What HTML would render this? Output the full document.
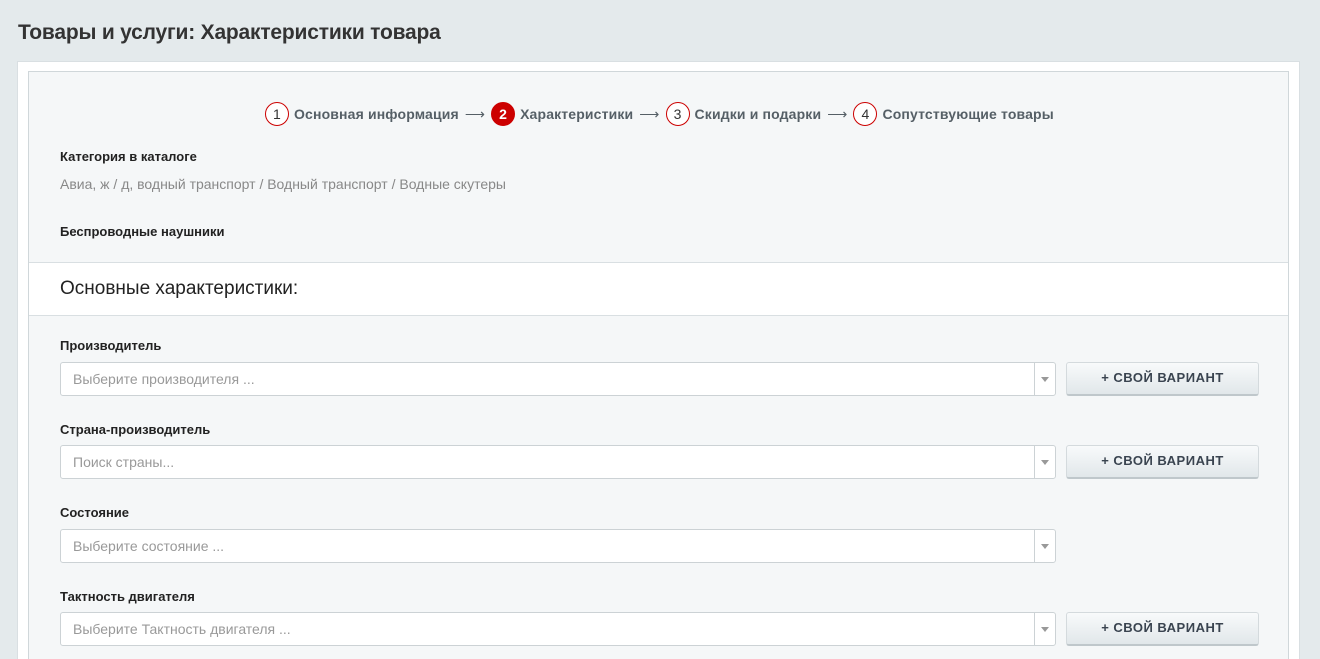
<!DOCTYPE html>
<html style="width:1320px;height:659px;overflow:hidden"><head><meta charset="utf-8"><style>
*{box-sizing:border-box;margin:0;padding:0}
body{width:1320px;height:659px;overflow:hidden;background:#e4eaec;font-family:"Liberation Sans",sans-serif;position:relative}
h1{position:absolute;left:18px;top:21px;font-size:21px;font-weight:bold;color:#333;letter-spacing:-0.2px}
.outer{position:absolute;left:17px;top:61px;width:1283px;height:598px;background:#fff;border:1px solid #d9dfe2;border-bottom:none;overflow:hidden}
.inner{position:absolute;left:10px;top:9px;width:1261px;height:620px;background:#f5f7f8;border:1px solid #d0d7da}
.steps{position:absolute;top:30px;left:236px;font-size:14px;font-weight:bold;color:#555f66;display:flex;align-items:center;white-space:nowrap;letter-spacing:0.15px}
.c{display:inline-block;width:24px;height:24px;border:1px solid #c00;border-radius:50%;text-align:center;line-height:22px;color:#333;font-weight:normal;margin-right:5px;background:#fff}
.c.a{background:#c00;color:#fff;font-weight:bold}
.ar{margin:0 6px;font-weight:normal}
.lab{position:absolute;left:31px;font-size:13px;font-weight:bold;color:#222}
.path{position:absolute;left:31px;top:104px;font-size:14px;color:#888}
.band{position:absolute;left:0;top:190px;width:1259px;height:54px;background:#fff;border-top:1px solid #d9dfe2;border-bottom:1px solid #d9dfe2}
.band span{position:absolute;left:31px;top:15px;font-size:19px;color:#222}
.sel{position:absolute;left:31px;width:996px;height:34px;background:#fff;border:1px solid #ccd2d5;border-radius:3px;font-size:14px;color:#999;padding:8px 12px}
.sel:after{content:"";position:absolute;right:0;top:0;width:20px;height:32px;border-left:1px solid #ccd2d5}
.sel i{position:absolute;right:6px;top:14px;border:4px solid transparent;border-top:5px solid #999;z-index:1}
.btn{position:absolute;left:1037px;width:193px;height:34px;border-radius:3px;background:linear-gradient(#f8fafb,#e1e7ea);border:1px solid #d4dadd;border-bottom:2px solid #bfc7cb;font-size:13px;font-weight:bold;color:#3a4450;text-align:center;line-height:30px;letter-spacing:0.5px}
</style></head><body>
<h1>Товары и услуги: Характеристики товара</h1>
<div class="outer"><div class="inner">
<div class="steps"><span class="c">1</span>Основная информация<span class="ar">⟶</span><span class="c a">2</span>Характеристики<span class="ar">⟶</span><span class="c">3</span>Скидки и подарки<span class="ar">⟶</span><span class="c">4</span>Сопутствующие товары</div>
<div class="lab" style="top:77px">Категория в каталоге</div>
<div class="path">Авиа, ж / д, водный транспорт / Водный транспорт / Водные скутеры</div>
<div class="lab" style="top:152px">Беспроводные наушники</div>
<div class="band"><span>Основные характеристики:</span></div>
<div class="lab" style="top:266px">Производитель</div>
<div class="sel" style="top:290px">Выберите производителя ...<i></i></div>
<div class="btn" style="top:290px">+ СВОЙ ВАРИАНТ</div>
<div class="lab" style="top:350px">Страна-производитель</div>
<div class="sel" style="top:373px">Поиск страны...<i></i></div>
<div class="btn" style="top:373px">+ СВОЙ ВАРИАНТ</div>
<div class="lab" style="top:433px">Состояние</div>
<div class="sel" style="top:457px">Выберите состояние ...<i></i></div>
<div class="lab" style="top:517px">Тактность двигателя</div>
<div class="sel" style="top:540px">Выберите Тактность двигателя ...<i></i></div>
<div class="btn" style="top:540px">+ СВОЙ ВАРИАНТ</div>
</div></div>
</body></html>
